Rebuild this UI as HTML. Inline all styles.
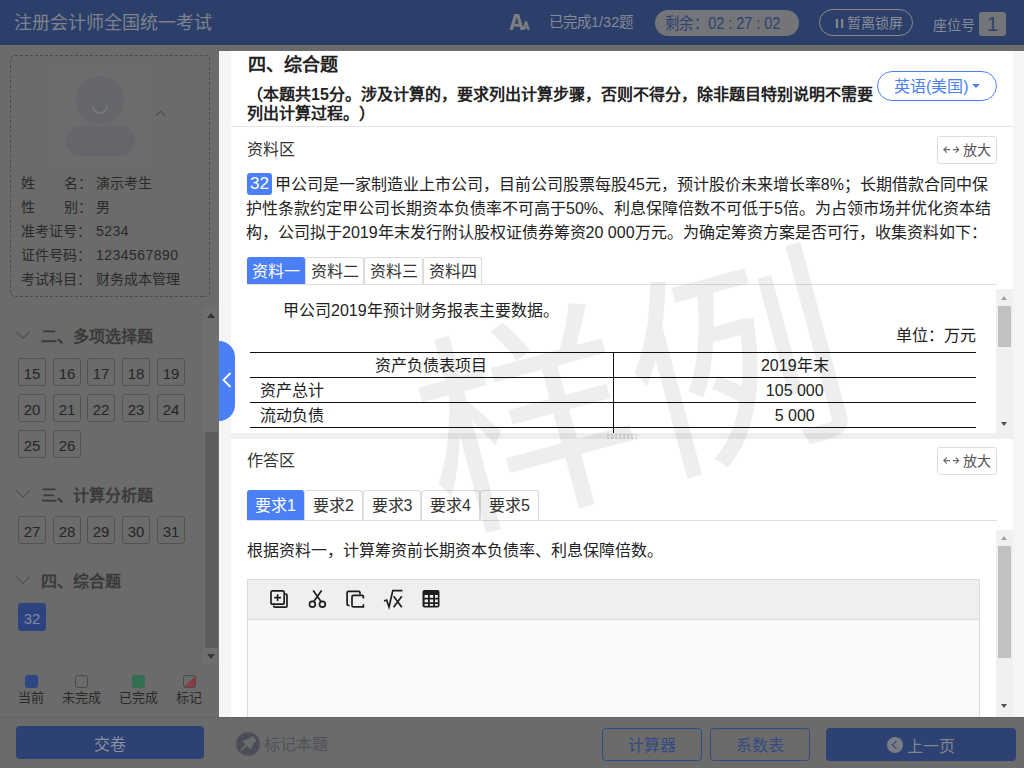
<!DOCTYPE html>
<html lang="zh-CN"><head><meta charset="utf-8">
<style>
*{box-sizing:border-box;margin:0;padding:0}
html,body{width:1024px;height:768px;overflow:hidden}
body{text-spacing-trim:space-all;position:relative;background:#6b6b6b;font-family:"Liberation Sans",sans-serif;color:#222}
.a{position:absolute;white-space:nowrap}
#hdr{left:0;top:0;width:1024px;height:45px;background:#2c3f6b}
.ttl{left:14px;top:11px;font-size:18px;line-height:24px;color:#7e828c}
.qb{position:absolute;width:28px;height:28px;border:1px solid #525252;border-radius:3px;font-size:15px;line-height:30px;text-align:center;color:#262626}
.sec{font-size:16px;font-weight:bold;color:#3a3a3a;line-height:20px}
.chev{position:absolute;width:9px;height:9px;border-right:1px solid #4e4e4e;border-bottom:1px solid #4e4e4e;transform:rotate(45deg)}
.info{font-size:14px;line-height:24px;color:#2a2a2a}
.tab{position:absolute;border:1px solid #dcdcdc;border-bottom:none;border-radius:3px 3px 0 0;font-size:16px;text-align:center;color:#333;background:#fff}
.tab.on{background:#4a7ff5;border-color:#4a7ff5;color:#fff}
.fbtn{position:absolute;border:1.5px solid #2f4c8c;border-radius:4px;font-size:16px;text-align:center;color:#334a82;line-height:34px}
.zoom{position:absolute;width:60px;height:28px;border:1px solid #dedede;border-radius:3px;background:#fff;font-size:15px;color:#555;line-height:26px}
table.t{position:absolute;border-collapse:collapse;font-size:16px;color:#222}
table.t td{border-top:1px solid #111;border-bottom:1px solid #111;height:25px;padding:0;line-height:23px}
</style></head><body>
<!-- header -->
<div id="hdr" class="a"></div>
<div class="a ttl">注册会计师全国统一考试</div>


<!-- header right -->
<svg class="a" style="left:500px;top:5px" width="40" height="35" viewBox="500 5 40 35"><path fill-rule="evenodd" fill="#7c7d80" d="M509.4 30 L514.4 14 L519 14 L524 30 L520.6 30 L519.6 26.8 L513.9 26.8 L512.9 30 Z M514.8 23.8 L518.7 23.8 L516.75 17.3 Z"/><path fill-rule="evenodd" fill="#7c7d80" d="M522.2 30 L525 21.2 L527.1 21.2 L529.8 30 L527.6 30 L527.1 28.4 L525.1 28.4 L524.5 30 Z M525.6 26.6 L526.6 26.6 L526.1 24.4 Z"/></svg>
<div class="a" style="left:549px;top:12px;font-size:14.5px;line-height:20px;color:#858995">已完成1/32题</div>
<div class="a" style="left:655px;top:10px;width:144px;height:26px;border-radius:13px;background:#737579"></div>
<div class="a" style="left:665px;top:13.5px;font-size:16px;line-height:20px;color:#2f4170;transform:scaleX(0.9);transform-origin:0 0">剩余：02 : 27 : 02</div>
<div class="a" style="left:819px;top:9px;width:94px;height:27px;border-radius:14px;border:1px solid #8a8a8a"></div>
<div class="a" style="left:835px;top:13px;font-size:14px;line-height:20px;color:#8a8d96"><b style="font-size:13px;letter-spacing:-1px">I I</b> 暂离锁屏</div>
<div class="a" style="left:933px;top:15px;font-size:14px;line-height:20px;color:#858995">座位号</div>
<div class="a" style="left:979px;top:12px;width:27px;height:24px;border-radius:3px;background:#737579;color:#2f4170;font-size:20px;line-height:24px;text-align:center">1</div>

<!-- sidebar -->
<div class="a" style="left:10px;top:55px;width:200px;height:242px;border:1px dashed #4c4c4c;border-radius:5px"></div>
<div class="a" style="left:50px;top:65px;width:100px;height:101px;background:#6c6c6c"></div>
<div class="a" style="left:76px;top:76px;width:48px;height:48px;border-radius:50%;background:#64666b"></div>
<div class="a" style="left:92px;top:105px;width:16px;height:9px;border:2.4px solid #74767a;border-top:none;border-radius:0 0 9px 9px"></div>
<div class="a" style="left:66px;top:126px;width:69px;height:30px;border-radius:15px;background:#64666b"></div>
<div class="chev" style="left:156.5px;top:112px;width:7px;height:7px;transform:rotate(-135deg);border-right:1.5px solid #4a4c54;border-bottom:1.5px solid #4a4c54"></div>
<div class="a info" style="left:21px;top:171px">姓<span style="display:inline-block;width:29px"></span>名：</div>
<div class="a info" style="left:96px;top:171px">演示考生</div>
<div class="a info" style="left:21px;top:195px">性<span style="display:inline-block;width:29px"></span>别：</div>
<div class="a info" style="left:96px;top:195px">男</div>
<div class="a info" style="left:21px;top:219px">准考证号：</div>
<div class="a info" style="left:96px;top:219px;letter-spacing:0.45px">5234</div>
<div class="a info" style="left:21px;top:243px">证件号码：</div>
<div class="a info" style="left:96px;top:243px;letter-spacing:0.45px">1234567890</div>
<div class="a info" style="left:21px;top:267px">考试科目：</div>
<div class="a info" style="left:96px;top:267px">财务成本管理</div>

<!-- sidebar scrollbar -->
<div class="a" style="left:203px;top:307px;width:16px;height:357px;background:#6f6f6f"></div>
<div class="a" style="left:205px;top:432px;width:13px;height:216px;background:#5d5d5d"></div>
<div class="a" style="left:207px;top:313px;width:0;height:0;border-left:4px solid transparent;border-right:4px solid transparent;border-bottom:5px solid #333"></div>
<div class="a" style="left:207px;top:654px;width:0;height:0;border-left:4px solid transparent;border-right:4px solid transparent;border-top:5px solid #3a3a3a"></div>

<div class="chev" style="left:18px;top:327px;width:10px;height:10px"></div>
<div class="a sec" style="left:41px;top:327px">二、多项选择题</div>
<div class="qb" style="left:18px;top:358px">15</div>
<div class="qb" style="left:53px;top:358px">16</div>
<div class="qb" style="left:87px;top:358px">17</div>
<div class="qb" style="left:122px;top:358px">18</div>
<div class="qb" style="left:157px;top:358px">19</div>
<div class="qb" style="left:18px;top:394px">20</div>
<div class="qb" style="left:53px;top:394px">21</div>
<div class="qb" style="left:87px;top:394px">22</div>
<div class="qb" style="left:122px;top:394px">23</div>
<div class="qb" style="left:157px;top:394px">24</div>
<div class="qb" style="left:18px;top:430px">25</div>
<div class="qb" style="left:53px;top:430px">26</div>

<div class="chev" style="left:18px;top:486px;width:10px;height:10px"></div>
<div class="a sec" style="left:41px;top:486px">三、计算分析题</div>
<div class="qb" style="left:18px;top:516px">27</div>
<div class="qb" style="left:53px;top:516px">28</div>
<div class="qb" style="left:87px;top:516px">29</div>
<div class="qb" style="left:122px;top:516px">30</div>
<div class="qb" style="left:157px;top:516px">31</div>

<div class="chev" style="left:18px;top:572px;width:10px;height:10px"></div>
<div class="a sec" style="left:41px;top:572px">四、综合题</div>
<div class="qb" style="left:18px;top:603px;background:#2d4380;border-color:#2d4380;color:#828aa0">32</div>

<!-- legend -->
<div class="a" style="left:25px;top:675px;width:13px;height:13px;border-radius:3px;background:#2e4586"></div>
<div class="a" style="left:75px;top:675px;width:13px;height:13px;border-radius:3px;border:1px solid #4a4a4a"></div>
<div class="a" style="left:132px;top:675px;width:13px;height:13px;border-radius:3px;background:#346e52"></div>
<div class="a" style="left:183px;top:675px;width:13px;height:13px;border-radius:3px;border:1px solid #4a4a4a;overflow:hidden;background:linear-gradient(135deg,transparent 50%,#8e3a42 50%)"></div>
<div class="a" style="left:18px;top:689px;font-size:13px;line-height:18px;color:#2a2a2a">当前</div>
<div class="a" style="left:62px;top:689px;font-size:13px;line-height:18px;color:#2a2a2a">未完成</div>
<div class="a" style="left:119px;top:689px;font-size:13px;line-height:18px;color:#2a2a2a">已完成</div>
<div class="a" style="left:176px;top:689px;font-size:13px;line-height:18px;color:#2a2a2a">标记</div>


<!-- panel -->
<div class="a" style="left:219px;top:51px;width:805px;height:666px;background:#f5f5f5"></div>
<div class="a" style="left:231px;top:51px;width:782px;height:75px;background:#fff"></div>
<div class="a" style="left:231px;top:126px;width:782px;height:1px;background:#e3e3e3"></div>
<div class="a" style="left:231px;top:127px;width:782px;height:306px;background:#fff"></div>
<div class="a" style="left:231px;top:433px;width:782px;height:6px;background:#efefef"></div>
<div class="a" style="left:231px;top:439px;width:782px;height:278px;background:#fff"></div>

<!-- title -->
<div class="a" style="left:248px;top:54px;font-size:18px;line-height:22px;font-weight:bold;color:#222">四、综合题</div>
<div class="a" style="left:247px;top:85px;font-size:16px;line-height:19px;font-weight:bold;color:#222;white-space:normal;width:640px">（本题共15分。涉及计算的，要求列出计算步骤，否则不得分，除非题目特别说明不需要列出计算过程。）</div>
<div class="a" style="left:877px;top:71px;width:120px;height:30px;border:1px solid #4d7ff2;border-radius:15px"></div>
<div class="a" style="left:894px;top:77px;font-size:16px;line-height:20px;color:#4d7ff2">英语(美国)</div>
<div class="a" style="left:972px;top:84px;width:0;height:0;border-left:4px solid transparent;border-right:4px solid transparent;border-top:4px solid #4d7ff2"></div>

<!-- material -->
<div class="a" style="left:247px;top:140px;font-size:16px;line-height:20px;color:#333">资料区</div>
<div class="zoom" style="left:937px;top:136px"><svg style="position:absolute;left:0;top:0" width="30" height="26" viewBox="0 0 30 26"><path d="M8.8 9.7 L5.9 12.6 L8.8 15.6 M6.1 12.6 H12.2 M14.8 12.6 H20.8 M17.8 9.7 L20.7 12.6 L17.8 15.6" fill="none" stroke="#6a6a6a" stroke-width="1.2"/></svg><span style="position:absolute;left:25px;top:0;font-size:14px">放大</span></div>
<div class="a" style="left:247px;top:173px;width:25px;height:22px;border-radius:3px;background:#4a7ff5;color:#fff;font-size:17px;line-height:22px;text-align:center">32</div>
<div class="a" style="left:246px;top:173px;width:751px;white-space:normal;font-size:16px;line-height:24px;color:#222;text-indent:29px">甲公司是一家制造业上市公司，目前公司股票每股45元，预计股价未来增长率8%；长期借款合同中保护性条款约定甲公司长期资本负债率不可高于50%、利息保障倍数不可低于5倍。为占领市场并优化资本结构，公司拟于2019年末发行附认股权证债券筹资20 000万元。为确定筹资方案是否可行，收集资料如下：</div>

<div class="a" style="left:247px;top:284px;width:750px;height:1px;background:#e0e0e0"></div>
<div class="tab on" style="left:247px;top:257px;width:58px;height:27px;line-height:27px">资料一</div>
<div class="tab" style="left:305px;top:257px;width:59px;height:27px;line-height:27px">资料二</div>
<div class="tab" style="left:364px;top:257px;width:59px;height:27px;line-height:27px">资料三</div>
<div class="tab" style="left:423px;top:257px;width:59px;height:27px;line-height:27px">资料四</div>

<div class="a" style="left:283px;top:301px;font-size:16px;line-height:20px;color:#222">甲公司2019年预计财务报表主要数据。</div>
<div class="a" style="left:896px;top:326px;font-size:16px;line-height:20px;color:#222">单位：万元</div>
<table class="t" style="left:250px;top:352px;width:726px">
<tr><td style="width:363px;text-align:center;border-right:1px solid #111">资产负债表项目</td><td style="text-align:center">2019年末</td></tr>
<tr><td style="padding-left:10px;border-right:1px solid #111">资产总计</td><td style="text-align:center">105 000</td></tr>
<tr><td style="padding-left:10px;border-right:1px solid #111">流动负债</td><td style="text-align:center">5 000</td></tr>
</table>
<!-- material scrollbar -->
<div class="a" style="left:996px;top:289px;width:17px;height:144px;background:#f0f0f0"></div>
<div class="a" style="left:998px;top:306px;width:13px;height:41px;background:#c1c1c1"></div>
<div class="a" style="left:1001px;top:295.5px;width:0;height:0;border-left:3.5px solid transparent;border-right:3.5px solid transparent;border-bottom:4.5px solid #a3a3a3"></div>
<div class="a" style="left:1001px;top:421.5px;width:0;height:0;border-left:3.5px solid transparent;border-right:3.5px solid transparent;border-top:4.5px solid #505050"></div>
<svg class="a" style="left:600px;top:425px" width="50" height="15" viewBox="600 425 50 15"><g fill="#c4c4c4"><rect x="607.2" y="434.0" width="1.6" height="1.6"/><rect x="607.2" y="437.2" width="1.6" height="1.6"/><rect x="611.2" y="434.0" width="1.6" height="1.6"/><rect x="611.2" y="437.2" width="1.6" height="1.6"/><rect x="615.3" y="434.0" width="1.6" height="1.6"/><rect x="615.3" y="437.2" width="1.6" height="1.6"/><rect x="619.4" y="434.0" width="1.6" height="1.6"/><rect x="619.4" y="437.2" width="1.6" height="1.6"/><rect x="623.4" y="434.0" width="1.6" height="1.6"/><rect x="623.4" y="437.2" width="1.6" height="1.6"/><rect x="627.5" y="434.0" width="1.6" height="1.6"/><rect x="627.5" y="437.2" width="1.6" height="1.6"/><rect x="631.5" y="434.0" width="1.6" height="1.6"/><rect x="631.5" y="437.2" width="1.6" height="1.6"/><rect x="635.6" y="434.0" width="1.6" height="1.6"/><rect x="635.6" y="437.2" width="1.6" height="1.6"/></g><rect x="613" y="427" width="1" height="6" fill="#111"/></svg>

<!-- answer -->
<div class="a" style="left:247px;top:451px;font-size:16px;line-height:20px;color:#333">作答区</div>
<div class="zoom" style="left:937px;top:447px"><svg style="position:absolute;left:0;top:0" width="30" height="26" viewBox="0 0 30 26"><path d="M8.8 9.7 L5.9 12.6 L8.8 15.6 M6.1 12.6 H12.2 M14.8 12.6 H20.8 M17.8 9.7 L20.7 12.6 L17.8 15.6" fill="none" stroke="#6a6a6a" stroke-width="1.2"/></svg><span style="position:absolute;left:25px;top:0;font-size:14px">放大</span></div>
<div class="a" style="left:247px;top:520px;width:750px;height:1px;background:#e0e0e0"></div>
<div class="tab on" style="left:247px;top:490px;width:57px;height:30px;line-height:30px">要求1</div>
<div class="tab" style="left:304px;top:490px;width:59px;height:30px;line-height:30px">要求2</div>
<div class="tab" style="left:363px;top:490px;width:58px;height:30px;line-height:30px">要求3</div>
<div class="tab" style="left:421px;top:490px;width:59px;height:30px;line-height:30px">要求4</div>
<div class="tab" style="left:480px;top:490px;width:59px;height:30px;line-height:30px">要求5</div>
<div class="a" style="left:247px;top:541px;font-size:16px;line-height:20px;color:#222">根据资料一，计算筹资前长期资本负债率、利息保障倍数。</div>
<div class="a" style="left:247px;top:579px;width:733px;height:138px;border:1px solid #dcdcdc;border-bottom:none;background:#fafafa"></div>
<div class="a" style="left:248px;top:580px;width:731px;height:40px;background:#efefef;border-bottom:1px solid #dcdcdc"></div>

<!-- toolbar icons -->
<svg class="a" style="left:265px;top:585px" width="180" height="28" viewBox="265 585 180 28">
<g fill="none" stroke="#1e1e1e" stroke-width="1.7">
<path d="M273.8 605.5 V606 Q273.8 607.2 275 607.2 H285.8 Q287 607.2 287 606 V595.2 Q287 594 285.8 594 H285"/>
<rect x="271" y="590.8" width="13.2" height="13.4" rx="1.8" fill="#efefef"/>
<path d="M277.6 594.2 V601 M274.2 597.6 H281" stroke-width="1.6"/>
<circle cx="312.4" cy="604.2" r="2.9"/>
<circle cx="322.4" cy="604.2" r="2.9"/>
<path d="M313.2 590.5 L321 601.6 M321.6 590.5 L313.8 601.6"/>
<path d="M349.5 605.4 H348.5 Q347.1 605.4 347.1 604 V592.9 Q347.1 591.4 348.5 591.4 H358.6 Q360 591.4 360 592.9 V594.6"/>
<path d="M363.4 598.6 V596.8 Q363.4 595.3 362 595.3 H353.4 Q352 595.3 352 596.8 V605.4 Q352 606.9 353.4 606.9 H363.4 V604.2"/>
<path d="M384 601 L386.6 600 L389 607 L392.8 590.6 H402.5" stroke-width="1.7"/>
<path d="M393.6 596.2 L401.8 607.2 M401.8 596.2 L393.6 607.2" stroke-width="1.7"/>
</g>
<rect x="422.5" y="590" width="17" height="17.5" rx="2" fill="#1e1e1e"/>
<g fill="#efefef">
<rect x="424.6" y="595" width="3.4" height="2.8"/><rect x="429.8" y="595" width="3.4" height="2.8"/><rect x="435" y="595" width="2.8" height="2.8"/>
<rect x="424.6" y="599.5" width="3.4" height="2.8"/><rect x="429.8" y="599.5" width="3.4" height="2.8"/><rect x="435" y="599.5" width="2.8" height="2.8"/>
<rect x="424.6" y="604" width="3.4" height="1.8"/><rect x="429.8" y="604" width="3.4" height="1.8"/><rect x="435" y="604" width="2.8" height="1.8"/>
</g>
</svg>
<!-- answer scrollbar -->
<div class="a" style="left:996px;top:530px;width:17px;height:187px;background:#f0f0f0"></div>
<div class="a" style="left:998px;top:546px;width:13px;height:112px;background:#c1c1c1"></div>
<div class="a" style="left:1001px;top:536px;width:0;height:0;border-left:3.5px solid transparent;border-right:3.5px solid transparent;border-bottom:4.5px solid #a3a3a3"></div>
<div class="a" style="left:1001px;top:704px;width:0;height:0;border-left:3.5px solid transparent;border-right:3.5px solid transparent;border-top:4.5px solid #505050"></div>

<!-- watermark -->
<div class="a" style="left:374px;top:278px;width:520px;height:240px;text-align:center;font-size:218px;line-height:240px;color:rgba(0,0,0,0.068);transform:rotate(-15deg)">样例</div>

<!-- collapse tab -->
<div class="a" style="left:219px;top:341px;width:16px;height:80px;background:#4a7ff5;border-radius:0 16px 16px 0"></div>
<svg class="a" style="left:219px;top:365px" width="16" height="30" viewBox="0 0 16 30"><path d="M11.5 8 L4.5 15 L11.5 22" fill="none" stroke="#fff" stroke-width="1.8"/></svg>

<!-- footer -->
<div class="a" style="left:0;top:717px;width:1024px;height:1px;background:#636363"></div>
<div class="a" style="left:16px;top:726px;width:188px;height:33px;border-radius:4px;background:#2d4173;color:#8d93a3;font-size:16px;line-height:37px;text-align:center">交卷</div>
<svg class="a" style="left:236px;top:732px" width="24" height="24" viewBox="236 732 24 24"><circle cx="248" cy="744" r="11.8" fill="#4b4e56"/><path d="M252.1 736.1 L256.7 740.5 L253.6 743.2 L250.8 749.7 L242.1 741.3 L248.6 738.8 Z" fill="#6b6b6b"/><path d="M246.3 745.3 L241.6 749.6" stroke="#6b6b6b" stroke-width="2" stroke-linecap="round"/></svg>
<div class="a" style="left:264px;top:735px;font-size:16px;line-height:20px;color:#4f525a">标记本题</div>
<div class="fbtn" style="left:602px;top:728px;width:100px;height:33px">计算器</div>
<div class="fbtn" style="left:710px;top:728px;width:100px;height:33px">系数表</div>
<div class="a" style="left:826px;top:728px;width:190px;height:33px;border-radius:4px;background:#2d4173"></div>
<div class="a" style="left:887px;top:737px;width:16px;height:16px;border-radius:50%;background:#7a7d85"></div><div class="a" style="left:893px;top:742px;width:6px;height:6px;border-left:1.5px solid #2f4478;border-bottom:1.5px solid #2f4478;transform:rotate(45deg)"></div>
<div class="a" style="left:907px;top:737px;font-size:16px;line-height:20px;color:#80848e">上一页</div>
</body></html>
